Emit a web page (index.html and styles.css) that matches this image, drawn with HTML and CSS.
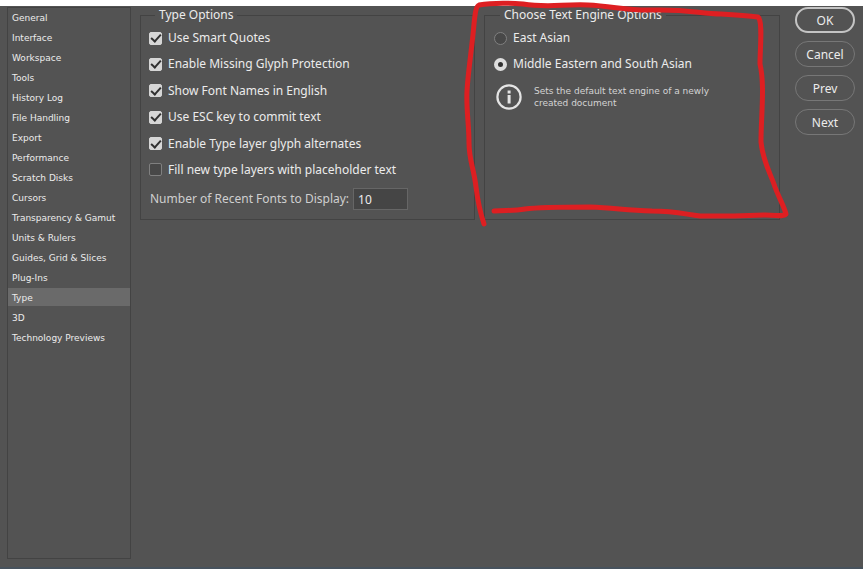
FILE: index.html
```html
<!DOCTYPE html>
<html lang="en">
<head>
<meta charset="utf-8">
<title>Preferences</title>
<link rel="stylesheet" href="styles.css">
</head>
<body>
<main class="dialog">
  <nav class="sidebar" aria-label="Preference sections">
    <a class="section" href="#general">General</a>
    <a class="section" href="#interface">Interface</a>
    <a class="section" href="#workspace">Workspace</a>
    <a class="section" href="#tools">Tools</a>
    <a class="section" href="#history">History Log</a>
    <a class="section" href="#files">File Handling</a>
    <a class="section" href="#export">Export</a>
    <a class="section" href="#performance">Performance</a>
    <a class="section" href="#scratch">Scratch Disks</a>
    <a class="section" href="#cursors">Cursors</a>
    <a class="section" href="#transparency">Transparency &amp; Gamut</a>
    <a class="section" href="#units">Units &amp; Rulers</a>
    <a class="section" href="#guides">Guides, Grid &amp; Slices</a>
    <a class="section" href="#plugins">Plug-Ins</a>
    <a class="section current" href="#type" aria-current="page">Type</a>
    <a class="section" href="#3d">3D</a>
    <a class="section" href="#technology">Technology Previews</a>
  </nav>

  <form class="content">
    <fieldset class="group type-options">
      <legend>Type Options</legend>
      <div class="checks">
        <label class="option"><input class="check" type="checkbox" checked>Use Smart Quotes</label>
        <label class="option"><input class="check" type="checkbox" checked>Enable Missing Glyph Protection</label>
        <label class="option"><input class="check" type="checkbox" checked>Show Font Names in English</label>
        <label class="option"><input class="check" type="checkbox" checked>Use ESC key to commit text</label>
        <label class="option"><input class="check" type="checkbox" checked>Enable Type layer glyph alternates</label>
        <label class="option"><input class="check" type="checkbox">Fill new type layers with placeholder text</label>
      </div>
      <div class="recent">
        <label for="recent-fonts">Number of Recent Fonts to Display:</label>
        <input class="number" id="recent-fonts" type="text" value="10">
      </div>
    </fieldset>

    <fieldset class="group engine-options">
      <legend>Choose Text Engine Options</legend>
      <div class="radios">
        <label class="option"><input class="radio" type="radio" name="engine">East Asian</label>
        <label class="option"><input class="radio" type="radio" name="engine" checked>Middle Eastern and South Asian</label>
      </div>
      <div class="info">
        <svg class="info-icon" viewBox="0 0 26 26" aria-hidden="true">
          <circle cx="13" cy="13" r="11.6" fill="none" stroke="#e4e4e4" stroke-width="2.2"/>
          <path d="M11.6 6.6h3v2.8h-3zM11.6 11h3v8.6h-3z" fill="#e4e4e4"/>
        </svg>
        <p class="info-text">Sets the default text engine of a newly created document</p>
      </div>
    </fieldset>

    <div class="actions">
      <button class="button primary" type="button">OK</button>
      <button class="button" type="button">Cancel</button>
      <button class="button" type="button">Prev</button>
      <button class="button" type="button">Next</button>
    </div>
  </form>
</main>
<svg class="markup" width="863" height="569" viewBox="0 0 863 569" aria-hidden="true">
  <path d="M484 224C480 212 478 203 476 187C474 169 469 160 469 143C469 124 466 108 467 91C468 72 472 48 474 24C475 14 476 6 479 5C490 3 510 3 523 4C548 8 562 4 588 5C612 6 630 11 652 10C690 9 700 14 721 14C738 15 750 16 758 17C763 21 760 48 760 64C765 86 761 115 761 142C763 162 770 172 775 187C779 198 784 206 786 214C784 217 778 215 765 215L734 216H700C684 214 675 211 652 211C625 210 615 208 590 207C558 207 540 207 525 209C513 211 506 210 494 211"/>
</svg>
</body>
</html>
```
FILE: styles.css
```css
* {
  box-sizing: border-box;
}

body {
  margin: 0;
  padding-top: 6px;
  min-height: 100vh;
  display: flex;
  background: #fff;
  color: #ececec;
  font: 12px/16px "Noto Sans", "DejaVu Sans Condensed", sans-serif;
}

.dialog {
  flex: 1;
  display: flex;
  gap: 9px;
  padding: 1px 8px 8px 7px;
  background: #535353;
  border-bottom: 2px solid #47525d;
}

.sidebar {
  flex: 0 0 124px;
  display: flex;
  flex-direction: column;
  gap: 2px;
  border: 1px solid #434343;
  font-family: "DejaVu Sans", sans-serif;
  font-size: 9px;
}

.section {
  padding: 2px 0 0 4px;
  line-height: 16px;
  color: #ececec;
  text-decoration: none;
  white-space: nowrap;
}

.section.current {
  background: #6a6a6a;
}

.content {
  flex: 1;
  display: flex;
  align-items: flex-start;
  gap: 9px;
}

.group {
  min-width: 0;
  min-height: 213px;
  margin: 0;
  border: 1px solid #434343;
}

.type-options {
  flex: 1;
  padding: 7px 8px 0;
}

.engine-options {
  flex: 0 0 296px;
  padding: 7px 9px 0;
}

legend {
  margin-left: 6px;
  padding: 0 4px;
}

.checks {
  display: grid;
  align-content: space-between;
  min-height: 148px;
}

.radios {
  display: grid;
  gap: 10px;
}

.option {
  display: flex;
  align-items: center;
  gap: 6px;
  white-space: nowrap;
}

.check,
.radio {
  appearance: none;
  flex: none;
  width: 13px;
  height: 13px;
  margin: 0;
  border: 1px solid #808080;
  background: #484848;
}

.check {
  border-radius: 2px;
}

.check:checked {
  display: grid;
  place-items: center;
  border-color: #d6d6d6;
  background: #d6d6d6;
}

.check:checked::before {
  content: "";
  width: 8px;
  height: 4px;
  border: solid #303030;
  border-width: 0 0 2px 2px;
  transform: translateY(-1px) rotate(-48deg);
}

.radio {
  border-radius: 50%;
}

.radio:checked {
  border: 4px solid #dedede;
  background: #303030;
}

.recent {
  display: flex;
  align-items: center;
  gap: 4px;
  margin-top: 10px;
  padding-left: 1px;
  color: #cfcfcf;
  white-space: nowrap;
}

.number {
  width: 55px;
  height: 22px;
  padding: 0 4px;
  border: 1px solid #666;
  background: #454545;
  color: #ececec;
  font: inherit;
}

.info {
  display: flex;
  align-items: center;
  gap: 12px;
  margin-top: 12px;
  padding-left: 2px;
}

.info-icon {
  flex: none;
  width: 26px;
  height: 26px;
}

.info-text {
  max-width: 190px;
  margin: 0;
  color: #d4d4d4;
  font-family: "DejaVu Sans", sans-serif;
  font-size: 9px;
  line-height: 12px;
}

.actions {
  flex: 0 0 60px;
  display: grid;
  gap: 8px;
  margin: 0 0 0 6px;
}

.button {
  height: 26px;
  padding: 2px 0 0;
  border: 1px solid #777;
  border-radius: 13px;
  background: transparent;
  color: #ececec;
  font: inherit;
}

.button.primary {
  border: 2px solid #c4c4c4;
}

.markup {
  position: absolute;
  top: 0;
  left: 0;
  fill: none;
  stroke: #dd1f22;
  stroke-width: 5;
  stroke-linecap: round;
  stroke-linejoin: round;
  pointer-events: none;
}
```
